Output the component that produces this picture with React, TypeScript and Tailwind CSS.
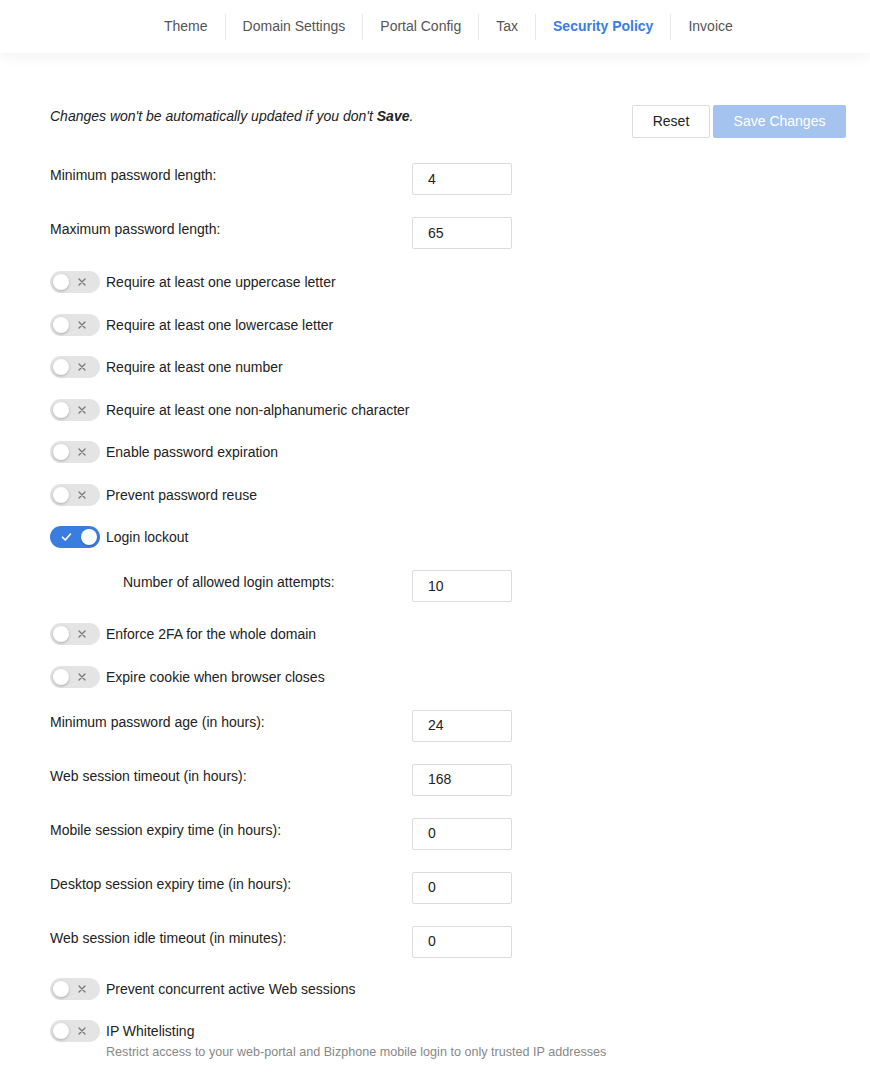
import * as React from "react";

const tabs = ["Theme", "Domain Settings", "Portal Config", "Tax", "Security Policy", "Invoice"];

function Toggle({ on }: { on?: boolean }) {
  return (
    <div
      className={
        "relative h-[22px] w-[50px] shrink-0 rounded-full " +
        (on ? "bg-[#3a7de1]" : "bg-[#e4e4e4]")
      }
    >
      {on ? (
        <>
          <svg className="absolute left-[11px] top-[6px]" width="11" height="10" viewBox="0 0 11 10">
            <path d="M1.5 5.2 L4.3 8 L9.5 2" fill="none" stroke="#fff" strokeWidth="1.6" strokeLinecap="round" strokeLinejoin="round" />
          </svg>
          <span className="absolute right-[3px] top-[3px] h-4 w-4 rounded-full bg-white shadow-[0_1px_2px_rgba(0,0,0,0.2)]" />
        </>
      ) : (
        <>
          <span className="absolute left-[3px] top-[3px] h-4 w-4 rounded-full bg-white shadow-[0_1px_3px_rgba(0,0,0,0.25)]" />
          <svg className="absolute left-[28px] top-[7px]" width="8" height="8" viewBox="0 0 8 8">
            <path d="M1 1 L7 7 M7 1 L1 7" stroke="#7a7a7a" strokeWidth="1.4" strokeLinecap="round" />
          </svg>
        </>
      )}
    </div>
  );
}

function ToggleRow({ label, on }: { label: string; on?: boolean }) {
  return (
    <div className="flex h-[42.5px] items-start gap-[6px]">
      <Toggle on={on} />
      <span className="text-[14px] leading-[22px] text-[#222]">{label}</span>
    </div>
  );
}

function InputRow({
  label,
  value,
  indent,
  first,
  h = "h-[54px]",
}: {
  label: string;
  value: string;
  indent?: boolean;
  first?: boolean;
  h?: string;
}) {
  return (
    <div className={"flex items-start " + h + (first ? " mt-[1.5px]" : "")}>
      <span
        className={
          "pt-[2px] text-[14px] leading-[20px] text-[#222] " +
          (indent ? "w-[289px] ml-[73px]" : "w-[362px]")
        }
      >
        {label}
      </span>
      <div className="flex h-[32px] w-[100px] items-center rounded-[2px] border border-[#dcdcdc] bg-white pl-[15px] text-[14px] text-[#222]">
        {value}
      </div>
    </div>
  );
}

export default function App() {
  return (
    <div className="min-h-[1080px] bg-white font-['Liberation_Sans',Arial,sans-serif]">
      <nav className="relative z-10 flex h-[53px] items-center bg-white pl-[147px] shadow-[0_3px_14px_rgba(0,0,0,0.06)]">
        {tabs.map((t, i) => (
          <div
            key={t}
            className={
              "flex h-[26px] items-center px-[17px] text-[14px] " +
              (i > 0 ? "border-l border-[#e6e6e6] " : "") +
              (t === "Security Policy" ? "font-bold text-[#3a7de1]" : "text-[#555]")
            }
          >
            {t}
          </div>
        ))}
      </nav>

      <main className="pl-[50px] pr-[24px] pt-[52px]">
        <div className="mb-[25px] flex h-[33px] items-start justify-between">
          <p className="mt-[1px] text-[14px] italic leading-[20px] text-[#222]">
            Changes won't be automatically updated if you don't <b>Save</b>.
          </p>
          <div className="flex gap-[3px]">
            <button className="h-[33px] w-[78px] rounded-[2px] border border-[#dcdcdc] bg-white text-[14px] text-[#222]">
              Reset
            </button>
            <button className="h-[33px] w-[133px] rounded-[2px] bg-[#a5c3ef] text-[14px] text-white">
              Save Changes
            </button>
          </div>
        </div>

        <InputRow label="Minimum password length:" value="4" />
        <InputRow label="Maximum password length:" value="65" />

        <ToggleRow label="Require at least one uppercase letter" />
        <ToggleRow label="Require at least one lowercase letter" />
        <ToggleRow label="Require at least one number" />
        <ToggleRow label="Require at least one non-alphanumeric character" />
        <ToggleRow label="Enable password expiration" />
        <ToggleRow label="Prevent password reuse" />
        <ToggleRow label="Login lockout" on />

        <InputRow label="Number of allowed login attempts:" value="10" indent first h="h-[53px]" />

        <ToggleRow label="Enforce 2FA for the whole domain" />
        <ToggleRow label="Expire cookie when browser closes" />

        <InputRow label="Minimum password age (in hours):" value="24" first />
        <InputRow label="Web session timeout (in hours):" value="168" />
        <InputRow label="Mobile session expiry time (in hours):" value="0" />
        <InputRow label="Desktop session expiry time (in hours):" value="0" />
        <InputRow label="Web session idle timeout (in minutes):" value="0" h="h-[52px]" />

        <ToggleRow label="Prevent concurrent active Web sessions" />
        <div className="flex items-start gap-[6px]">
          <Toggle />
          <div>
            <div className="text-[14px] leading-[22px] text-[#222]">IP Whitelisting</div>
            <div className="mt-[2px] text-[12.6px] leading-[16px] text-[#888]">
              Restrict access to your web-portal and Bizphone mobile login to only trusted IP addresses
            </div>
          </div>
        </div>
      </main>
    </div>
  );
}
